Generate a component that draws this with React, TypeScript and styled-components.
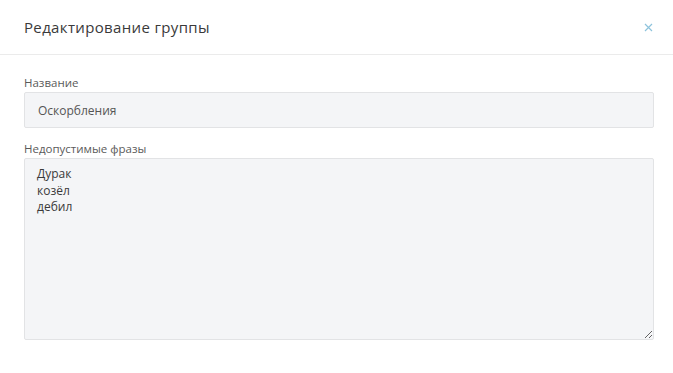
import React from "react";
import styled, { createGlobalStyle } from "styled-components";

const Global = createGlobalStyle`
  html, body { margin: 0; padding: 0; background: #ffffff; }
  body { font-family: "Open Sans", "Noto Sans", sans-serif; color: #3c3c3c; }
  * { box-sizing: border-box; }
`;

const Modal = styled.div`
  width: 673px;
  height: 373px;
  background: #fff;
  display: flex;
  flex-direction: column;
`;

const Header = styled.div`
  height: 55px;
  display: flex;
  align-items: center;
  justify-content: space-between;
  padding: 0 18px 0 24px;
  border-bottom: 1px solid #ebebeb;
`;

const Title = styled.h2`
  margin: 0;
  font-size: 15px;
  font-weight: 400;
  color: #3a3a3a;
  letter-spacing: 0.35px;
`;

const Close = styled.button`
  border: none;
  background: none;
  padding: 0;
  width: 14px;
  height: 14px;
  display: flex;
  align-items: center;
  justify-content: center;
  cursor: pointer;
`;

const Body = styled.div`
  padding: 20px 19px 0 24px;
  display: flex;
  flex-direction: column;
`;

const Field = styled.div`
  display: flex;
  flex-direction: column;
  margin-bottom: 13px;
`;

const Label = styled.label`
  font-size: 11.5px;
  color: #5a5a5a;
  line-height: 16px;
  margin-bottom: 1px;
`;

const Input = styled.input`
  height: 36px;
  border: 1px solid #e2e3e5;
  background: #f4f5f7;
  border-radius: 2px;
  padding: 0 13px;
  font-family: inherit;
  font-size: 12px;
  color: #555;
  outline: none;
`;

const TextArea = styled.textarea`
  height: 182px;
  border: 1px solid #e2e3e5;
  background: #f4f5f7;
  border-radius: 2px;
  padding: 7px 12px;
  font-family: inherit;
  font-size: 12px;
  line-height: 16.5px;
  color: #3a3a3a;
  outline: none;
  resize: vertical;
`;

export default function App() {
  return (
    <>
      <Global />
      <Modal>
        <Header>
          <Title>Редактирование группы</Title>
          <Close aria-label="Закрыть">
            <svg width="9" height="9" viewBox="0 0 9 9">
              <path d="M1 1L8 8M8 1L1 8" stroke="#8ec3dc" strokeWidth="1.2" />
            </svg>
          </Close>
        </Header>
        <Body>
          <Field>
            <Label>Название</Label>
            <Input defaultValue="Оскорбления" />
          </Field>
          <Field>
            <Label>Недопустимые фразы</Label>
            <TextArea defaultValue={"Дурак\nкозёл\nдебил"} />
          </Field>
        </Body>
      </Modal>
    </>
  );
}
